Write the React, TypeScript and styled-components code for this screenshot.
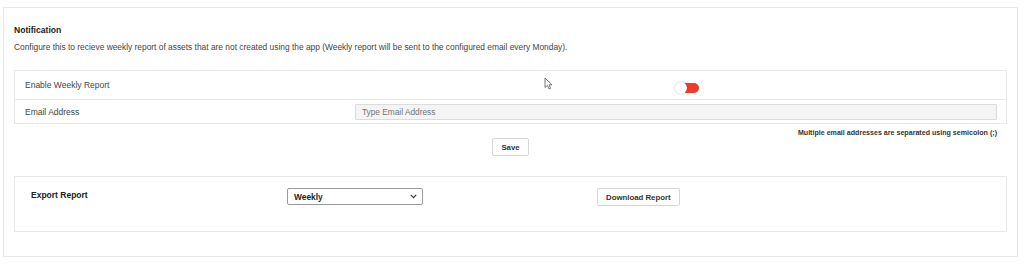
import React from 'react';
import styled, { createGlobalStyle } from 'styled-components';

const GlobalStyle = createGlobalStyle`
  body {
    margin: 0;
    background: #fff;
    font-family: 'Liberation Sans', Arial, sans-serif;
    color: #333;
  }
`;

const Panel = styled.div`
  position: relative;
  box-sizing: border-box;
  margin: 7px 0 0 3px;
  width: 1015px;
  height: 250px;
  padding: 16px 10px 0;
  border: 1px solid #e6e6e6;
`;

const Title = styled.h4`
  margin: 0;
  font-size: 8.6px;
  line-height: 12px;
  font-weight: 700;
  color: #222;
`;

const Description = styled.p`
  margin: 5px 0 0;
  font-size: 8.4px;
  line-height: 12px;
  color: #444;
`;

const SettingsTable = styled.div`
  margin-top: 17px;
  border: 1px solid #e8e8e8;
`;

const SettingRow = styled.div<{ height: number }>`
  display: grid;
  grid-template-columns: 330px 1fr;
  align-items: center;
  height: ${(p) => p.height}px;
  box-sizing: border-box;
  padding: 0 9px 0 10px;
  & + & {
    border-top: 1px solid #e8e8e8;
  }
`;

const Label = styled.span<{ bold?: boolean }>`
  font-size: 8.5px;
  line-height: 12px;
  font-weight: ${(p) => (p.bold ? 700 : 400)};
  color: ${(p) => (p.bold ? '#222' : '#444')};
`;

const ToggleCell = styled.div`
  display: flex;
  justify-content: center;
  padding: 5px 0 0 22px;
`;

const Toggle = styled.div`
  position: relative;
  width: 23px;
  height: 10px;
  border-radius: 6px;
  background: #f23b26;
`;

const Knob = styled.span`
  position: absolute;
  left: -1px;
  top: -1px;
  width: 12px;
  height: 12px;
  border-radius: 50%;
  background: #fff;
  box-shadow: 0 0 2px rgba(0, 0, 0, 0.3);
`;

const EmailInput = styled.input`
  box-sizing: border-box;
  width: 100%;
  height: 16px;
  padding: 0 6px;
  border: 1px solid #dcdcdc;
  border-radius: 1px;
  background: #f4f4f4;
  font-family: inherit;
  font-size: 8.3px;
  color: #555;
  outline: none;

  ::placeholder {
    color: #999;
  }
`;

const Hint = styled.div`
  margin-top: 4px;
  padding-right: 10px;
  text-align: right;
  font-size: 7.1px;
  line-height: 10px;
  font-weight: 700;
  color: #333;
`;

const ButtonRow = styled.div`
  display: flex;
  justify-content: center;
`;

const Button = styled.button`
  box-sizing: border-box;
  height: 18px;
  padding: 0 8px;
  border: 1px solid #d6d6d6;
  border-radius: 2px;
  background: #fff;
  font-family: inherit;
  font-size: 7.8px;
  font-weight: 700;
  color: #333;
  cursor: pointer;
`;

const ExportBox = styled.div`
  box-sizing: border-box;
  margin-top: 20px;
  height: 56px;
  padding: 11px 16px 0;
  border: 1px solid #e8e8e8;
  display: grid;
  grid-template-columns: 256px 310px auto;
  align-items: start;
`;

const ExportLabel = styled(Label)`
  display: block;
  margin-top: 1px;
`;

const SelectWrap = styled.div`
  position: relative;
  width: 136px;
  height: 17px;
`;

const Select = styled.select`
  display: block;
  box-sizing: border-box;
  width: 100%;
  height: 100%;
  padding: 0 6px;
  appearance: none;
  border: 1px solid #999;
  border-radius: 2px;
  background: #fff;
  font-family: inherit;
  font-size: 8.4px;
  font-weight: 700;
  color: #222;
  outline: none;
`;

const Chevron = styled.svg`
  position: absolute;
  right: 6px;
  top: 6px;
  pointer-events: none;
`;

const ButtonCell = styled.div`
  display: flex;
`;

const Pointer = styled.svg`
  position: absolute;
  left: 540px;
  top: 69px;
`;

export default function App(): React.ReactElement {
  return (
    <>
      <GlobalStyle />
      <Panel>
        <Title>Notification</Title>
        <Description>
          Configure this to recieve weekly report of assets that are not created using the app (Weekly report will be
          sent to the configured email every Monday).
        </Description>
        <SettingsTable>
          <SettingRow height={28}>
            <Label>Enable Weekly Report</Label>
            <ToggleCell>
              <Toggle>
                <Knob />
              </Toggle>
            </ToggleCell>
          </SettingRow>
          <SettingRow height={24}>
            <Label>Email Address</Label>
            <EmailInput type="text" placeholder="Type Email Address" />
          </SettingRow>
        </SettingsTable>
        <Hint>Multiple email addresses are separated using semicolon (;)</Hint>
        <ButtonRow>
          <Button>Save</Button>
        </ButtonRow>
        <ExportBox>
          <ExportLabel bold>Export Report</ExportLabel>
          <SelectWrap>
            <Select defaultValue="weekly">
              <option value="weekly">Weekly</option>
              <option value="monthly">Monthly</option>
            </Select>
            <Chevron width="7" height="5" viewBox="0 0 7 5">
              <path d="M0.8 0.8 L3.5 3.6 L6.2 0.8" fill="none" stroke="#333" strokeWidth="1.2" />
            </Chevron>
          </SelectWrap>
          <ButtonCell>
            <Button>Download Report</Button>
          </ButtonCell>
        </ExportBox>
        <Pointer width="9" height="13" viewBox="0 0 9 13">
          <path d="M1 1 L1 10.5 L3.4 8.4 L5 12 L6.6 11.3 L5 7.8 L8 7.8 Z" fill="#fff" stroke="#666" strokeWidth="0.9" />
        </Pointer>
      </Panel>
    </>
  );
}
